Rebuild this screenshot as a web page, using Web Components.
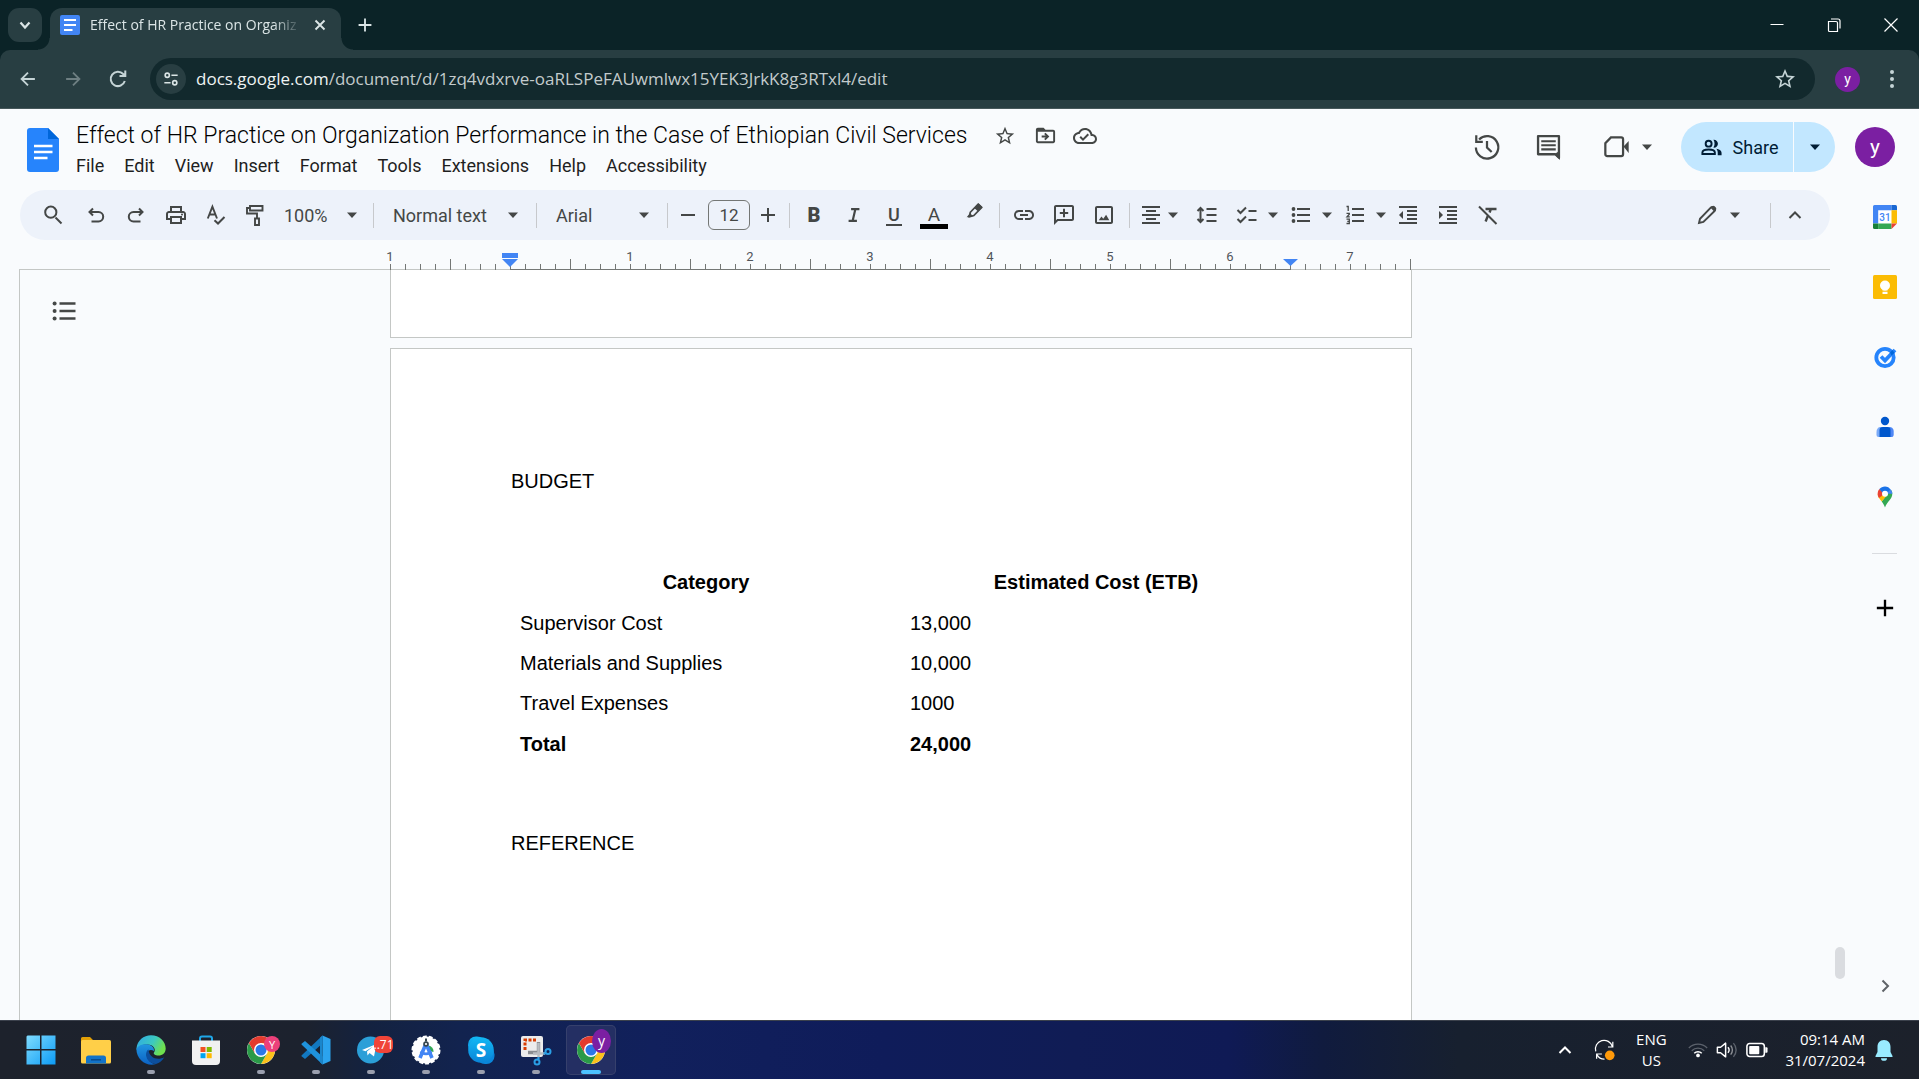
<!DOCTYPE html>
<html lang="en">
<head>
<meta charset="utf-8">
<title>Effect of HR Practice on Organization Performance in the Case of Ethiopian Civil Services</title>
<style>
  html, body { margin: 0; height: 100%; overflow: hidden; }
  body { font-family: Roboto, "Liberation Sans", sans-serif; color: #1f1f1f; background: #f9fbfd; }
</style>
</head>
<body>
<desktop-shell>
  <browser-tabs slot="chrome"></browser-tabs>
  <browser-bar slot="chrome"></browser-bar>
  <docs-header slot="app"></docs-header>
  <docs-workspace slot="app">
    <docs-toolbar slot="editor"></docs-toolbar>
    <docs-ruler slot="editor"></docs-ruler>
    <docs-canvas slot="editor">
      <docs-page tail></docs-page>
      <docs-page>
        <doc-heading>BUDGET</doc-heading>
        <budget-table></budget-table>
        <doc-heading>REFERENCE</doc-heading>
      </docs-page>
    </docs-canvas>
    <side-panel slot="side"></side-panel>
  </docs-workspace>
  <task-bar slot="os"></task-bar>
</desktop-shell>

<script>
const S = (d, w = 2, extra = '') => `<path d="${d}" fill="none" stroke="currentColor" stroke-width="${w}" ${extra}/>`;
const F = d => `<path d="${d}" fill="currentColor"/>`;
const chromeLogo = `
  <circle cx="15" cy="15" r="14" fill="#fff"/>
  <path d="M15 8 H27.1 A14 14 0 0 1 15 29 L21 18.5Z" fill="#fcc21b"/>
  <path d="M2.9 8 A14 14 0 0 0 15 29 L21 18.5 L9 18.5Z" fill="#2a9a48"/>
  <path d="M15 8 H27.1 A14 14 0 0 0 2.9 8 L9 18.5 Z" fill="#e33b2e"/>
  <circle cx="15" cy="15" r="7" fill="#fff"/><circle cx="15" cy="15" r="5.5" fill="#2b78e8"/>`;

/* name: [viewBox, markup] */
const ICONS = {
  caret: ['0 0 12 12', F('M1 3.5h10L6 9z')],
  search: ['0 0 24 24', S('M14.5 14.5L20.5 20.5') + '<circle cx="9.8" cy="9.2" r="5.6" fill="none" stroke="currentColor" stroke-width="2"/>'],
  undo: ['0 0 24 24', S('M9 5.5L5.5 9L9 12.5M5.5 9H14.5a4.2 4.2 0 0 1 0 9.4H7.5')],
  redo: ['0 0 24 24', S('M15 5.5L18.5 9L15 12.5M18.5 9H9.5a4.2 4.2 0 0 0 0 9.4H16.5')],
  print: ['0 0 24 24', F('M19 8h-1V3H6v5H5c-1.66 0-3 1.34-3 3v6h4v4h12v-4h4v-6c0-1.66-1.34-3-3-3zM8 5h8v3H8V5zm8 12v2H8v-4h8v2zm2-2v-2H6v2H4v-4c0-.55.45-1 1-1h14c.55 0 1 .45 1 1v4h-2z') + '<circle cx="18" cy="11.5" r="1" fill="currentColor"/>'],
  spell: ['0 0 24 24', S('M3.8 15.5L8.4 3.6L13 15.5M5.6 11.5H11.4', 1.9) + S('M10.5 17.2L14 20.5L20.5 14')],
  roller: ['0 0 24 24', S('M7 3h12.5v4.5H7zM7 5H4v5.5h10V15M12 15.5h4v6.5h-4z', 1.9)],
  minus: ['0 0 24 24', S('M5 12H19')],
  plus: ['0 0 24 24', S('M5 12H19M12 5V19')],
  italic: ['0 0 24 24', S('M8.5 5H18.5M5.5 19H15.5M13.6 5L10.4 19', 2.6)],
  highlight: ['0 3 24 24', S('M8 12L16.5 3.2L20.3 6.8L11.8 15.6L7 17z', 1.9) + F('M12.5 7.5L17 2.2L21.3 6.4L16.5 11.3zM4 17.5L8 12.5L10.5 16.5z')],
  link: ['0 0 24 24', F('M3.9 12c0-1.71 1.39-3.1 3.1-3.1h4V7H7c-2.76 0-5 2.24-5 5s2.24 5 5 5h4v-1.9H7c-1.71 0-3.1-1.39-3.1-3.1zM8 13h8v-2H8v2zm9-6h-4v1.9h4c1.71 0 3.1 1.39 3.1 3.1s-1.39 3.1-3.1 3.1h-4V17h4c2.76 0 5-2.24 5-5s-2.24-5-5-5z')],
  addcomment: ['0 0 24 24', F('M20 2H4c-1.1 0-2 .9-2 2v18l4-4h14c1.1 0 2-.9 2-2V4c0-1.1-.9-2-2-2zm0 14H5.17L4 17.17V4h16v12zM11 14.2h2V11h3.2V9H13V5.8h-2V9H7.8v2H11z')],
  image: ['0 0 24 24', F('M19 3H5c-1.1 0-2 .9-2 2v14c0 1.1.9 2 2 2h14c1.1 0 2-.9 2-2V5c0-1.1-.9-2-2-2zm0 16H5V5h14v14zM6.8 17.2l2.6-3.6 1.9 2.2 2.8-4 3.2 5.4z')],
  align: ['0 0 24 24', S('M3 4H21M7 8H17M3 12H21M7 16H17M3 20H21')],
  spacing: ['0 0 24 24', S('M11.5 6H21.5M11.5 12H21.5M11.5 18H21.5M5.5 5.5V18.5M2.5 8L5.5 5L8.5 8M2.5 16L5.5 19L8.5 16')],
  checklist: ['0 0 24 24', S('M2.5 7L5.5 10L11 4.5M2.5 16L5.5 19L11 13.5M13.5 8H21.5M13.5 17H21.5')],
  bullets: ['0 0 24 24', S('M8 6H21M8 12H21M8 18H21') + '<g fill="currentColor"><circle cx="4.5" cy="6" r="1.9"/><circle cx="4.5" cy="12" r="1.9"/><circle cx="4.5" cy="18" r="1.9"/></g>'],
  numbers: ['0 0 24 24', S('M9 6H21M9 12H21M9 18H21') + S('M3.5 3.5H5.2V8M3.5 10.3H6.3V11.2L4 13.8H6.8M3.5 16.2H6.3V20.5H3.5M4.3 18.3H6.3', 1.3)],
  dedent: ['0 0 24 24', F('M11 17h10v-2H11v2zm-8-5l4 4V8l-4 4zm0 9h18v-2H3v2zM3 3v2h18V3H3zm8 6h10V7H11v2zm0 4h10v-2H11v2z')],
  indent: ['0 0 24 24', F('M3 21h18v-2H3v2zM3 8v8l4-4-4-4zm8 9h10v-2H11v2zM3 3v2h18V3H3zm8 6h10V7H11v2zm0 4h10v-2H11v2z')],
  clear: ['0 0 24 24', S('M3 3.5L20.5 21') + S('M9.5 6H20.5M14.8 6L13.6 9.5M11.8 13L9.6 18.5', 2.4)],
  pencil: ['0 0 24 24', S('M4 20L5 15.8L16 4.4a1.8 1.8 0 0 1 2.6 0l1 1a1.8 1.8 0 0 1 0 2.6L8.4 19z', 1.9) + F('M15.5 4.8L17 3.3a2 2 0 0 1 2.6 0l1.2 1.2a2 2 0 0 1 0 2.6L19.2 8.6z')],
  up: ['0 0 24 24', S('M6.5 15L12 9.5L17.5 15')],
  star: ['0 0 24 24', F('M22 9.24l-7.19-.62L12 2 9.19 8.63 2 9.24l5.46 4.73L5.82 21 12 17.27 18.18 21l-1.63-7.03L22 9.24zM12 15.4l-3.76 2.27 1-4.28-3.32-2.88 4.38-.38L12 6.1l1.71 4.04 4.38.38-3.32 2.88 1 4.28L12 15.4z')],
  move: ['0 0 24 24', F('M20 6h-8l-2-2H4c-1.1 0-2 .9-2 2v12c0 1.1.9 2 2 2h16c1.1 0 2-.9 2-2V8c0-1.1-.9-2-2-2zm0 12H4V8h16v10zM12.16 12H8v2h4.16l-1.59 1.59L11.99 17 16 13.01 11.99 9l-1.41 1.41z')],
  cloud: ['0 0 24 24', F('M19.35 10.04C18.67 6.59 15.64 4 12 4 9.11 4 6.6 5.64 5.35 8.04 2.34 8.36 0 10.91 0 14c0 3.31 2.69 6 6 6h13c2.76 0 5-2.24 5-5 0-2.64-2.05-4.78-4.65-4.96zM19 18H6c-2.21 0-4-1.79-4-4 0-2.05 1.53-3.76 3.56-3.97l1.07-.11.5-.95C8.08 7.14 9.94 6 12 6c2.62 0 4.88 1.86 5.39 4.43l.3 1.5 1.53.11c1.56.1 2.78 1.41 2.78 2.96 0 1.65-1.35 3-3 3zm-9-3.82l-2.09-2.09L6.5 13.5 10 17l6.01-6.01-1.41-1.41z')],
  history: ['0 0 30 30', S('M6.5 7A12 12 0 1 1 3.1 15.5', 2.4) + S('M3.5 2.5V9.5H10.5', 2.4) + S('M15 8.5V15.5L20 20.3', 2.4)],
  comments: ['0 0 30 30', S('M4.2 3.2H25.8V25.5L22 22H4.2z', 2.4, 'stroke-linejoin="round"') + F('M26.9 18V28L21 22z') + S('M7.5 8.5H22.5M7.5 12.7H22.5M7.5 17H22.5', 2.2)],
  video: ['0 0 30 30', S('M8.5 4.8H19.5a2 2 0 0 1 2 2V22.7a2 2 0 0 1-2 2H4.5a2 2 0 0 1-2-2V11z', 2.4) + F('M22 14.5L27.5 8.5V21.5z')],
  people: ['0 0 24 24', '<circle cx="9" cy="8" r="3.1" fill="none" stroke="currentColor" stroke-width="2"/>' + S('M2.5 18.8V17.3C2.5 15 6 14 9 14s6.5 1 6.5 3.3V18.8z') + F('M14 3.9c2.6-.3 4.7 1.6 4.7 4.1s-2.1 4.4-4.7 4.1c1.6-2.3 1.6-5.9 0-8.2zM17 13.4c3 .5 5.5 1.8 5.5 4V20H18.5V17.4c0-1.6-.6-2.9-1.5-4z')],
  outline: ['0 0 24 24', S('M7.5 4.5H23.5M7.5 12H23.5M7.5 19.5H23.5', 2.3) + '<g fill="currentColor"><circle cx="2.6" cy="4.5" r="2"/><circle cx="2.6" cy="12" r="2"/><circle cx="2.6" cy="19.5" r="2"/></g>'],
  right: ['0 0 24 24', S('M9.5 6.5L15 12L9.5 17.5')],
  chevdown: ['0 0 24 24', S('M7.5 9.5L12 14.5L16.5 9.5', 2.2)],
  close: ['0 0 24 24', S('M7.5 7.5L16.5 16.5M16.5 7.5L7.5 16.5', 1.9)],
  winmin: ['0 0 24 24', S('M5.5 11.5H18.5', 1)],
  winmax: ['0 0 24 24', S('M6.5 8.5H14a1.5 1.5 0 0 1 1.5 1.5V18.5H7.5a1 1 0 0 1-1-1zM9 6H16a2 2 0 0 1 2 2V15.5', 1.2)],
  winclose: ['0 0 24 24', S('M5.5 5.5L18.5 18.5M18.5 5.5L5.5 18.5', 1.2)],
  back: ['0 0 24 24', S('M19.5 12H5.5M12 5L5 12L12 19')],
  forward: ['0 0 24 24', S('M4.5 12H18.5M12 5L19 12L12 19')],
  reload: ['0 0 24 24', S('M18.8 14A7.2 7.2 0 1 1 17.2 7L19 8.8M19.3 3.5V9H13.5')],
  tune: ['0 0 24 24', S('M12.5 7.5H20M4 16.5H11.5') + '<g fill="none" stroke="currentColor" stroke-width="2"><circle cx="7.5" cy="7.5" r="2.5"/><circle cx="16.5" cy="16.5" r="2.5"/></g>'],
  dots: ['0 0 24 24', '<g fill="currentColor"><circle cx="12" cy="5" r="2"/><circle cx="12" cy="12" r="2"/><circle cx="12" cy="19" r="2"/></g>'],
  favicon: ['0 0 20 20', '<rect width="20" height="20" rx="2" fill="#4285f4"/><path d="M4 5H16M4 10H16M4 15H12.5" stroke="#fff" stroke-width="2"/>'],
  docs: ['0 0 32 44', '<path d="M3 0H21L32 11V41a3 3 0 0 1-3 3H3a3 3 0 0 1-3-3V3a3 3 0 0 1 3-3z" fill="#2684fc"/><path d="M21 0L32 11H21z" fill="#0066da"/><path d="M7 18H25.5M7 24H25.5M7 30H20.5" stroke="#fff" stroke-width="2.6"/>'],
  calendar: ['0 0 24 24', '<path d="M5 5H19V19H5z" fill="#fff"/><path d="M1.5 0H18.5V5.2H5.2V18.5H0V1.5A1.5 1.5 0 0 1 1.5 0z" fill="#4285f4"/><path d="M18.5 0H22.5A1.5 1.5 0 0 1 24 1.5V5.2H18.5z" fill="#1967d2"/><path d="M18.5 5.2H24V18.5H18.5z" fill="#fbbc04"/><path d="M5.2 18.5H18.5V24H5.2z" fill="#34a853"/><path d="M0 18.5H5.2V24H1.5A1.5 1.5 0 0 1 0 22.5z" fill="#188038"/><path d="M18.5 18.5H24L18.5 24z" fill="#ea4335"/><text x="12" y="15.8" font-family="Roboto, sans-serif" font-size="10" font-weight="500" text-anchor="middle" fill="#4285f4">31</text>'],
  keep: ['0 0 24 24', '<rect width="24" height="24" rx="1.5" fill="#fbbc04"/><circle cx="12" cy="10.5" r="5" fill="#fff"/><path d="M9.5 13H14.5V15.5H9.5zM9.5 16.7H14.5V19H9.5z" fill="#fff"/>'],
  tasks: ['0 0 24 24', '<circle cx="12" cy="12.5" r="8.7" fill="none" stroke="#2684fc" stroke-width="3.8"/><path d="M8 11.5L12 15.5L22 5" fill="none" stroke="#2684fc" stroke-width="3.8"/><path d="M17 7.5L19.5 5L21.5 8L18.5 10.5z" fill="#0066da"/>'],
  contacts: ['0 0 24 24', '<path d="M7.5 12H16.5C19 12 20.5 13.5 20.5 16V20A2 2 0 0 1 18.5 22H5.5A2 2 0 0 1 3.5 20V17C3.5 14 5 12 7.5 12z" fill="#7baaf7"/><path d="M16 12.2C19 12.2 20.5 14 20.5 16V20A2 2 0 0 1 18.5 22H15z" fill="#4f86f5"/><path d="M10 12H14.5A3 3 0 0 1 17.5 15V22H6.5V15A3.5 3 0 0 1 10 12z" fill="#0057cc"/><circle cx="12" cy="6" r="4.2" fill="#0057cc"/>'],
  maps: ['0 0 24 24', '<path d="M19.3 8.7C19.3 14.5 13.8 16.5 12 22.5C11.3 20.3 10.2 18.6 8.7 16.5L17.8 4.8C18.7 5.9 19.3 7.2 19.3 8.7z" fill="#34a853"/><path d="M8.7 16.5C6 13 4.7 11.5 4.7 8.7L14 7.5L15 9.3z" fill="#fbbc04"/><path d="M4.7 8.7C4.7 7 5.3 5.3 6.4 4.1L12 8.5L6 13C5.1 11.5 4.7 10.3 4.7 8.7z" fill="#ea4335"/><path d="M6.4 4.1C7.8 2.4 9.8 1.5 12 1.5S16.5 2.7 17.8 4.8L12 11z" fill="#1a73e8"/><path d="M17.8 4.8C18.7 5.9 19.3 7.2 19.3 8.7H13z" fill="#4285f4"/><circle cx="12" cy="8.7" r="3" fill="#fff"/>'],
  start: ['0 0 30 30', '<defs><linearGradient id="w" x1="0" y1="0" x2="1" y2="1"><stop offset="0" stop-color="#7fdcff"/><stop offset="1" stop-color="#0c9bf5"/></linearGradient></defs><path d="M1.5 .5H14V14H.5V1.5zM15.5 .5H29.5V14H15.5zM.5 15.5H14V29.5H.5zM15.5 15.5H29.5V29.5H15.5z" fill="url(#w)"/>'],
  files: ['0 0 30 30', '<path d="M0 3.5A1.5 1.5 0 0 1 1.5 2H9L12 5V10H0z" fill="#e2a007"/><rect y="5" width="30" height="23.5" rx="1.5" fill="#ffcf48"/><path d="M5 28.5V23A2.5 2.5 0 0 1 7.5 20.5H22.5A2.5 2.5 0 0 1 25 23V28.5z" fill="#1273c8"/><path d="M10 24.8H20" stroke="#0a4a8c" stroke-width="1.5"/>'],
  edge: ['0 0 30 30', '<defs><linearGradient id="e1" x1="0" y1="0" x2="1" y2=".4"><stop offset="0" stop-color="#2fa8e6"/><stop offset=".6" stop-color="#3cc9c0"/><stop offset="1" stop-color="#6fe04e"/></linearGradient><linearGradient id="e2" x1="0" y1="0" x2="0" y2="1"><stop offset="0" stop-color="#2196e0"/><stop offset="1" stop-color="#0b62c4"/></linearGradient></defs><path d="M.5 13C1.5 5.5 7.5 .3 15 .3C23.5 .3 29.7 6.5 29.7 13.5C29.7 18 26.5 20.5 22.5 20.5C19 20.5 17 19 18 17.5C20.5 14 17 9.5 11.5 9.5C6 9.5 2 11.5 .5 15z" fill="url(#e1)"/><path d="M.4 14C2 10.5 6 8.8 10.5 9.2C15.5 9.6 18.5 12.5 18 16C13 12.5 8.5 18 12 24C14 27.5 17.5 29.3 20 29C11 32 .3 25 .4 14z" fill="url(#e2)"/><path d="M12.5 14.5C8 17 9.5 28 20 29C23.5 28 26.5 25.5 28.3 22.3C21 26 13 22.5 12.5 14.5z" fill="#0c4f9e"/>'],
  store: ['0 0 30 30', '<path d="M9 7V3.5A2 2 0 0 1 11 1.5H19A2 2 0 0 1 21 3.5V7" fill="none" stroke="#1fa7e8" stroke-width="2"/><path d="M1 5.5H29V26A4 4 0 0 1 25 30H5A4 4 0 0 1 1 26z" fill="#f1f1f1"/><path d="M9.5 12H14.5V17H9.5z" fill="#f25022"/><path d="M15.7 12H20.7V17H15.7z" fill="#7fba00"/><path d="M9.5 18.2H14.5V23.2H9.5z" fill="#00a4ef"/><path d="M15.7 18.2H20.7V23.2H15.7z" fill="#ffb900"/>'],
  chrome: ['0 0 30 30', chromeLogo],
  code: ['0 0 30 30', '<path d="M21.5 .5L29.5 4V26L21.5 29.5z" fill="#2ba3ee"/><path d="M21.5 .5V8.5L4 24L.5 21.2V20.5z" fill="#1278c0"/><path d="M21.5 29.5V21.5L4 6L.5 8.8V9.5z" fill="#1f93dc"/><path d="M19 2.8L21.5 .5V29.5L19 27.2z" fill="#1a86cc"/>'],
  telegram: ['0 0 30 30', '<circle cx="14.5" cy="15" r="13.5" fill="#2b9fd8"/><path d="M6 15L20.5 9L18 21.5L13.5 18L11.5 20.5L11 16.5L17 11.5L9.5 16.2z" fill="#fff"/>'],
  studio: ['0 0 30 30', '<circle cx="15" cy="15" r="13.5" fill="#fff" stroke="#fff" stroke-width="2" stroke-dasharray="4 2"/><path d="M17.5 10.5A6 6 0 0 1 22.5 17L18.5 16z" fill="#34a853"/><path d="M14.6 9.5L9 23M15.4 9.5L21 23" stroke="#4285f4" stroke-width="3.6"/><path d="M9.5 16.5C13 19.5 17 19.5 20.5 16.5" fill="none" stroke="#4285f4" stroke-width="2.5"/><circle cx="15" cy="9" r="2.8" fill="#37474f"/><circle cx="15" cy="9" r="1.1" fill="#fff"/><path d="M15 3.5V6.5" stroke="#37474f" stroke-width="2"/>'],
  skype: ['0 0 30 30', '<defs><linearGradient id="s" x1="0" y1="0" x2="0" y2="1"><stop offset="0" stop-color="#12b8f4"/><stop offset="1" stop-color="#0a84d8"/></linearGradient></defs><rect x="2" y="1.5" width="17" height="17" rx="8" fill="url(#s)"/><rect x="11" y="11.5" width="17.5" height="17.5" rx="8" fill="#0a86da"/><circle cx="15" cy="15" r="12.8" fill="url(#s)"/><text x="15" y="22" font-family="Open Sans, sans-serif" font-weight="700" font-size="19" text-anchor="middle" fill="#fff">S</text>'],
  snip: ['0 0 30 30', '<rect x="0" y="1" width="22" height="21" rx="2" fill="#ececec"/><path d="M4 15V5H16" fill="none" stroke="#d83b01" stroke-width="3" stroke-dasharray="3 1.5"/><path d="M17.5 7V17.5H7" fill="none" stroke="#8a8d91" stroke-width="3.4"/><path d="M17.5 8V22M12 18.5H24" stroke="#b9bcc0" stroke-width="2.5"/><circle cx="27" cy="16.5" r="2.5" fill="none" stroke="#2a9fe6" stroke-width="2"/><circle cx="16" cy="27" r="2.5" fill="none" stroke="#2a9fe6" stroke-width="2"/><path d="M17.5 22V24.500M22.500 18.500H24.500" stroke="#2a9fe6" stroke-width="2.200"/>'],
  sync: ['0 0 24 24', S('M2 13A9.5 9.5 0 0 1 21 7.5M21.5 2V8H16M3 21.5V16H9M3.5 17A9.5 9.5 0 0 0 12 21.8', 1.4) + '<circle cx="18" cy="17.5" r="5.5" fill="#ff9a0a"/>'],
  wifi: ['0 0 24 24', '<g fill="none" stroke="#5c626c" stroke-width="1.6"><path d="M1 9.5A15.5 15.5 0 0 1 23 9.5M4.5 13A10.5 10.5 0 0 1 19.5 13"/></g>' + S('M7.5 16A6.4 6.4 0 0 1 16.5 16', 1.8) + '<circle cx="12" cy="18.5" r="2.2" fill="currentColor"/>'],
  volume: ['0 0 24 24', S('M1.5 9H5L10.5 4.5V19.5L5 15H1.5z', 1.6, 'stroke-linejoin="round"') + S('M13 9A4.5 4.5 0 0 1 13 15', 1.5) + S('M16 7A7.5 7.5 0 0 1 16 17', 1.5, 'opacity=".5"') + '<path d="M19 4.5A11 11 0 0 1 19 19.5" fill="none" stroke="#5c626c" stroke-width="1.5"/>'],
  battery: ['0 0 24 24', '<rect x="1" y="5" width="19" height="14" rx="3" fill="none" stroke="currentColor" stroke-width="1.7"/><rect x="3.5" y="7.5" width="11" height="9" rx="1" fill="currentColor"/>' + F('M21 9H22.5A1 1 0 0 1 23.5 10V14A1 1 0 0 1 22.5 15H21z')],
  bell: ['0 0 18 22', '<path d="M9 1C4.8 1 2.5 4 2.5 8V13L.5 17V18H17.5V17L15.5 13V8C15.5 4 13.2 1 9 1z" fill="#99ebff"/><path d="M6 19.2H12A3 2.6 0 0 1 6 19.2z" fill="#99ebff"/>']
};

function define(tag, html, setup) {
  const template = document.createElement('template');
  template.innerHTML = html;
  customElements.define(tag, class extends HTMLElement {
    constructor() {
      super();
      this.attachShadow({ mode: 'open' }).append(template.content.cloneNode(true));
    }
    connectedCallback() {
      if (setup && !this.ready) { this.ready = true; setup(this, this.shadowRoot); }
    }
  });
}

define('g-icon', `<style>:host{display:inline-flex;flex:none}svg{display:block;overflow:visible}</style>`, (el, root) => {
  const [box, body] = ICONS[el.getAttribute('name')];
  const [, , w, h] = box.split(' ').map(Number);
  const size = Number(el.getAttribute('size') || w);
  const holder = document.createElement('template');
  holder.innerHTML = `<svg viewBox="${box}" width="${size}" height="${Math.round(size * h / w)}" aria-hidden="true">${body}</svg>`;
  root.append(holder.content);
});

const BTN = `button{font:inherit;color:inherit;background:none;border:0;margin:0;padding:0;display:flex;align-items:center;justify-content:center;cursor:pointer}`;

define('icon-button', `<style>
  :host{display:flex;width:40px;height:40px;flex:none}
  ${BTN}
  button{flex:1;border-radius:6px;gap:var(--gap,4px);padding-left:var(--inset,0px)}
</style><button type="button"><slot></slot></button>`, (el, root) => {
  const b = root.querySelector('button');
  b.setAttribute('aria-label', el.getAttribute('label'));
  if (el.hasAttribute('icon')) b.insertAdjacentHTML('afterbegin', `<g-icon name="${el.getAttribute('icon')}" size="${el.getAttribute('size') || 24}"></g-icon>`);
  if (el.hasAttribute('menu')) b.insertAdjacentHTML('beforeend', `<g-icon name="caret"></g-icon>`);
});

define('user-avatar', `<style>
  :host{display:block;flex:none}
  ${BTN}
  button{width:var(--size,40px);height:var(--size,40px);border-radius:50%;background:#7b1fa2;color:#fff;font-size:var(--letter,21px);line-height:1}
</style><button type="button" aria-label="Account"><slot></slot></button>`);

define('desktop-shell', `<style>
  :host{display:flex;flex-direction:column;height:100vh}
  .app{flex:1;min-height:0;display:flex;flex-direction:column;background:#f9fbfd}
</style><slot name="chrome"></slot><div class="app"><slot name="app"></slot></div><slot name="os"></slot>`);

define('browser-tabs', `<style>
  :host{display:flex;height:50px;background:#0b2327;color:#dbe5e6;font-family:"Open Sans",sans-serif;flex:none}
  ${BTN}
  .find{width:34px;height:34px;margin:8px 0 0 8px;border-radius:11px;background:#283e42}
  .tab{display:flex;align-items:center;position:relative;width:291px;height:42px;margin:8px 0 0 8px;border-radius:12px 12px 0 0;background:#283e42;box-sizing:border-box;padding:0 9px 8px 10px}
  .tab::before,.tab::after{content:"";position:absolute;bottom:0;width:12px;height:12px}
  .tab::before{left:-12px;background:radial-gradient(circle at 0 0,transparent 11px,#283e42 12px)}
  .tab::after{right:-12px;background:radial-gradient(circle at 100% 0,transparent 11px,#283e42 12px)}
  .name{flex:1;margin-left:10px;font-size:14px;line-height:20px;white-space:nowrap;-webkit-mask-image:linear-gradient(90deg,#000 84%,transparent 97%);mask-image:linear-gradient(90deg,#000 84%,transparent 97%)}
  .new{width:30px;height:34px;margin:8px 0 0 9px}
  .win{margin-left:auto;display:flex}
  .win button{width:57px;height:50px;color:#fff}
</style>
<button class="find" aria-label="Search tabs"><g-icon name="chevdown"></g-icon></button>
<div class="tab"><g-icon name="favicon"></g-icon><span class="name">Effect of HR Practice on Organiz</span><button aria-label="Close tab"><g-icon name="close"></g-icon></button></div>
<button class="new" aria-label="New tab"><g-icon name="plus" size="22"></g-icon></button>
<div class="win"><button aria-label="Minimize"><g-icon name="winmin"></g-icon></button><button aria-label="Restore"><g-icon name="winmax"></g-icon></button><button aria-label="Close"><g-icon name="winclose"></g-icon></button></div>`);

define('browser-bar', `<style>
  :host{display:block;background:#0b2327;color:#c5d4d6;flex:none}
  .bar{display:flex;align-items:center;height:58px;border-bottom:1px solid #46575a;background:#283e42;border-radius:10px 10px 0 0;padding-left:5px}
  ${BTN}
  .nav{width:45px;height:44px}
  .nav.off{color:#6e7f82}
  .box{flex:1;display:flex;align-items:center;height:42px;border-radius:21px;background:#12292d;margin:0 20px 0 10px;padding:0 18px 0 6px;font-family:"Open Sans",sans-serif}
  .site{width:30px;height:30px;border-radius:50%;background:#283e42;flex:none;color:#dbe5e6}
  .url{flex:1;margin-left:10px;font-size:17px;line-height:24px;color:#c3cbcc;white-space:nowrap}
  .url b{font-weight:400;color:#eef3f3}
  user-avatar{--size:25px;--letter:14px}
  .more{width:59px;height:44px;padding-left:4px}
</style>
<div class="bar">
<button class="nav" aria-label="Back"><g-icon name="back" size="22"></g-icon></button>
<button class="nav off" aria-label="Forward"><g-icon name="forward" size="22"></g-icon></button>
<button class="nav" aria-label="Reload"><g-icon name="reload"></g-icon></button>
<div class="box"><button class="site" aria-label="Site information"><g-icon name="tune" size="20"></g-icon></button><span class="url"><b>docs.google.com</b>/document/d/1zq4vdxrve-oaRLSPeFAUwmlwx15YEK3JrkK8g3RTxl4/edit</span><button aria-label="Bookmark"><g-icon name="star"></g-icon></button></div>
<user-avatar>y</user-avatar>
<button class="more" aria-label="Menu"><g-icon name="dots"></g-icon></button>
</div>`);

define('docs-header', `<style>
  :host{display:flex;align-items:flex-start;height:69px;padding:12px 24px 0 27px;flex:none}
  ${BTN}
  .logo{margin-top:7px}
  .text{margin-left:17px}
  .line{display:flex;align-items:center;height:29px;color:#444746}
  h1{margin:0 18px 0 0;font-weight:300;font-size:23px;line-height:29px;white-space:nowrap;color:#000}
  .line icon-button{height:29px}
  nav{display:flex;align-items:center;height:31px;gap:20px;font-size:18px}
  nav button{line-height:31px;color:#1f1f1f}
  .right{margin-left:auto;display:flex;align-items:center;height:52px;color:#444746}
  .right icon-button{width:50px}
  .right .cm{margin-left:11px}
  .right .meet{width:66px;margin:0 20px 0 22px;--gap:10px}
  .share{display:flex;height:50px;border-radius:25px;overflow:hidden;background:#c2e7ff;color:#001d35;font-size:18px;margin-right:20px}
  .share .main{width:113px;gap:10px;border-right:1px solid #f9fbfd;padding-left:4px;box-sizing:border-box}
  .share .drop{width:41px}
</style>
<g-icon class="logo" name="docs"></g-icon>
<div class="text">
  <div class="line"><h1>Effect of HR Practice on Organization Performance in the Case of Ethiopian Civil Services</h1>
    <icon-button label="Star" icon="star" size="22"></icon-button><icon-button label="Move" icon="move" size="23"></icon-button><icon-button label="Saved to Drive" icon="cloud" size="24"></icon-button></div>
  <nav><button>File</button><button>Edit</button><button>View</button><button>Insert</button><button>Format</button><button>Tools</button><button>Extensions</button><button>Help</button><button>Accessibility</button></nav>
</div>
<div class="right">
  <icon-button label="Last edit" icon="history" size="28"></icon-button>
  <icon-button class="cm" label="Comments" icon="comments" size="29"></icon-button>
  <icon-button class="meet" label="Join a call" icon="video" size="28" menu></icon-button>
  <div class="share"><button class="main"><g-icon name="people" size="23"></g-icon>Share</button><button class="drop" aria-label="Share options"><g-icon name="caret"></g-icon></button></div>
  <user-avatar>y</user-avatar>
</div>`);

define('docs-workspace', `<style>
  :host{display:flex;flex:1;min-height:0}
  .editor{flex:1;min-width:0;display:flex;flex-direction:column;margin-left:19px}
  .scroll{width:20px;display:flex;flex-direction:column;justify-content:flex-end;align-items:center}
  .thumb{width:10px;height:32px;border-radius:5px;background:#dadce0;margin-bottom:41px}
</style><div class="editor"><slot name="editor"></slot></div><div class="scroll"><div class="thumb"></div></div><slot name="side"></slot>`);

define('drop-down', `<style>
  :host{display:grid;align-items:center;height:40px;flex:none}
  select,g-icon{grid-area:1/1}
  select{appearance:none;border:0;background:none;font:inherit;font-size:18px;color:inherit;padding:0 0 0 var(--pad,19px);width:100%;height:40px;outline:0}
  g-icon{justify-self:end;margin-right:var(--end,17px);pointer-events:none}
</style><select></select><g-icon name="caret"></g-icon>`, (el, root) => {
  const select = root.querySelector('select');
  select.setAttribute('aria-label', el.getAttribute('label'));
  select.add(new Option(el.getAttribute('value')));
});

define('docs-toolbar', `<style>
  :host{display:flex;align-items:center;height:50px;border-radius:25px;background:#edf2fa;color:#444746;margin-left:1px;padding-left:13px;flex:none}
  hr{width:1px;height:25px;border:0;margin:0;background:#c7c9cc;flex:none}
  .first{margin-right:3px}
  .zoom{width:100px;--pad:11px;--end:15px}
  .style{width:162px}
  .font{width:130px}
  .paint{width:37px}
  input{box-sizing:border-box;width:42px;height:30px;border:1px solid #747775;border-radius:6px;background:none;font:17px Roboto,sans-serif;color:#444746;text-align:center;padding:0}
  .plus{width:35px;margin-right:4px}
  .group{display:flex;padding:0 5px 0 4px}
  .b{font-weight:900;font-size:20px}
  .u{font-weight:500;font-size:18px}
  .u span{line-height:19px;border-bottom:2px solid;padding:0 2px}
  .a{font-size:19px}
  .a span{line-height:19px;border-bottom:5px solid #000;width:28px;text-align:center;margin-top:3px}
  .al{width:57px;--gap:4px}
  .ls{width:39px}
  .split{width:54px;--gap:8px;--inset:8px}
  .right{margin-left:auto;display:flex;align-items:center}
  .mode{width:80px;--gap:10px;margin-right:12px}
  .hide{width:48px;margin-right:11px}
</style>
<icon-button class="first" label="Search menus" icon="search"></icon-button>
<icon-button label="Undo" icon="undo"></icon-button><icon-button label="Redo" icon="redo"></icon-button><icon-button label="Print" icon="print"></icon-button><icon-button label="Spelling" icon="spell"></icon-button><icon-button class="paint" label="Paint format" icon="roller"></icon-button>
<drop-down class="zoom" label="Zoom" value="100%"></drop-down><hr>
<drop-down class="style" label="Styles" value="Normal text"></drop-down><hr>
<drop-down class="font" label="Font" value="Arial"></drop-down><hr>
<icon-button label="Decrease font size" icon="minus"></icon-button><input value="12" aria-label="Font size"><icon-button class="plus" label="Increase font size" icon="plus"></icon-button><hr>
<div class="group"><icon-button class="b" label="Bold">B</icon-button><icon-button label="Italic" icon="italic" size="20"></icon-button><icon-button class="u" label="Underline"><span>U</span></icon-button><icon-button class="a" label="Text colour"><span>A</span></icon-button><icon-button label="Highlight colour" icon="highlight" size="22"></icon-button></div><hr>
<div class="group"><icon-button label="Insert link" icon="link"></icon-button><icon-button label="Add comment" icon="addcomment"></icon-button><icon-button label="Insert image" icon="image"></icon-button></div><hr>
<icon-button class="al" label="Align" icon="align" menu></icon-button><icon-button class="ls" label="Line spacing" icon="spacing"></icon-button><icon-button class="split" label="Checklist" icon="checklist" menu></icon-button><icon-button class="split" label="Bulleted list" icon="bullets" menu></icon-button><icon-button class="split" label="Numbered list" icon="numbers" menu></icon-button><icon-button label="Decrease indent" icon="dedent"></icon-button><icon-button label="Increase indent" icon="indent"></icon-button><icon-button label="Clear formatting" icon="clear"></icon-button>
<div class="right"><icon-button class="mode" label="Editing mode" icon="pencil" menu></icon-button><hr><icon-button class="hide" label="Hide the menus" icon="up"></icon-button></div>`);

define('docs-ruler', `<style>
  :host{display:flex;justify-content:center;height:30px;padding-right:47px;box-shadow:inset 0 -1px #c4c7c5;flex:none}
  svg{display:block;overflow:visible;flex:none}
  text{font:13px Roboto,sans-serif;fill:#50545a;text-anchor:middle}
</style>`, (el, root) => {
  let out = '';
  for (let i = 0; i <= 68; i++) {
    const x = i * 15;
    const tall = i % 8 === 4;
    out += `<rect x="${x}" y="${tall ? 19 : 24}" width="1" height="${tall ? 11 : 6}" fill="#747775"/>`;
    if (i % 8 === 0 && i !== 8) out += `<text x="${x}" y="21">${Math.abs(i / 8 - 1)}</text>`;
  }
  const t = document.createElement('template');
  t.innerHTML = `<svg width="1022" height="30">${out}<rect x="121" y="29" width="780" height="1" fill="#747775"/>
    <path d="M112 13h16v5h-16zM112 19h16L120 27z" fill="#4285f4"/><path d="M893 19h15L900.5 26z" fill="#4285f4"/></svg>`;
  root.append(t.content);
});

define('docs-canvas', `<style>
  :host{display:block;position:relative;flex:1;min-height:0;overflow:hidden;border-left:1px solid #c4c7c5}
  .pages{display:flex;flex-direction:column;align-items:center;gap:10px;padding-right:48px}
  .outline{position:absolute;left:24px;top:21px;color:#444746}
</style><icon-button class="outline" label="Show outline" icon="outline" size="24"></icon-button><div class="pages"><slot></slot></div>`);

define('docs-page', `<style>
  :host{display:block;box-sizing:border-box;width:1022px;min-height:1300px;padding:118px 120px;border:1px solid #c4c7c5;background:#fff;font:20px/28px "Liberation Sans",Arial,sans-serif;color:#000}
  :host([tail]){min-height:68px;padding:0;border-top:0}
</style><slot></slot>`);

define('doc-heading', `<style>:host{display:block}p{margin:0}</style><p><slot></slot></p>`);

define('budget-table', `<style>
  :host{display:block;margin:66px 0 65px}
  table{width:780px;border-collapse:collapse;table-layout:fixed}
  th,td{height:40px;box-sizing:border-box;padding:0 9px;text-align:left;font-weight:400}
  thead th{text-align:center;font-weight:700;height:42px}
  tfoot td{font-weight:700;height:41px}
</style>
<table>
<thead><tr><th scope="col">Category</th><th scope="col">Estimated Cost (ETB)</th></tr></thead>
<tbody><tr><td>Supervisor Cost</td><td>13,000</td></tr><tr><td>Materials and Supplies</td><td>10,000</td></tr><tr><td>Travel Expenses</td><td>1000</td></tr></tbody>
<tfoot><tr><td>Total</td><td>24,000</td></tr></tfoot>
</table>`);

define('side-panel', `<style>
  :host{display:flex;flex-direction:column;align-items:center;width:69px;flex:none}
  nav{display:flex;flex-direction:column;gap:46px;padding-top:15px}
  icon-button{height:24px}
  hr{width:25px;height:1px;border:0;background:#dadce0;margin:44px 0 42px}
  .add{color:#000}
  .end{margin:auto 0 22px;color:#5f6368}
</style>
<nav><icon-button label="Calendar" icon="calendar"></icon-button><icon-button label="Keep" icon="keep"></icon-button><icon-button label="Tasks" icon="tasks"></icon-button><icon-button label="Contacts" icon="contacts"></icon-button><icon-button label="Maps" icon="maps"></icon-button></nav>
<hr><icon-button class="add" label="Get add-ons" icon="plus" size="28"></icon-button>
<icon-button class="end" label="Hide side panel" icon="right"></icon-button>`);

define('task-app', `<style>
  :host{display:block;position:relative;width:50px;height:50px;flex:none}
  ${BTN}
  button{width:50px;height:50px;box-sizing:border-box;border-radius:5px}
  :host([active]) button{background:#242f63;box-shadow:inset 0 0 0 1px #36406c}
  .bar{position:absolute;left:21px;bottom:1px;width:8px;height:4px;border-radius:2px;background:#9a9fae;display:none}
  :host([open]) .bar,:host([active]) .bar{display:block}
  :host([active]) .bar{left:15px;width:20px;background:#4cc2ff}
  ::slotted(span){position:absolute;display:flex;align-items:center;justify-content:center;box-sizing:border-box;color:#fff;line-height:1;pointer-events:none}
</style><button type="button"></button><div class="bar"></div><slot></slot>`, (el, root) => {
  const b = root.querySelector('button');
  b.setAttribute('aria-label', el.getAttribute('label'));
  b.innerHTML = `<g-icon name="${el.getAttribute('icon')}" size="30"></g-icon>`;
});

define('task-bar', `<style>
  :host{display:flex;align-items:center;justify-content:space-between;box-sizing:border-box;height:59px;flex:none;border-top:1px solid #3b414c;padding:0 26px 0 16px;color:#fff;font:15px/21px "Open Sans",sans-serif;
    background:linear-gradient(90deg,#1d222c 0,#1c222e 16%,#14223f 19%,#12234f 24%,#11205c 34%,#0f1c5a 46%,#101c55 56%,#0f1a55 64%,#101b3e 69%,#17202f 76%,#1c212b 100%)}
  .apps{display:flex;gap:5px}
  .pink,.purple{border-radius:50%}
  .pink{left:28px;top:11px;width:16px;height:16px;background:#ec407a;font-size:11px}
  .purple{left:26px;top:4px;width:19px;height:24px;background:#7b1fa2;font-size:14px}
  .red{left:28px;top:11px;width:19px;height:17px;border-radius:6px;background:#f04438;font-size:12px}
  .tray{display:flex;align-items:center}
  ${BTN}
  .lang{width:32px;margin:0 21px 0 20px;flex-direction:column}
  .time{margin:0 10px 0 17px;flex-direction:column;align-items:flex-end;white-space:nowrap}
  .sync{margin-left:17px}
  .net{gap:8px}
</style>
<div class="apps">
<task-app label="Start" icon="start"></task-app><task-app label="File Explorer" icon="files"></task-app><task-app open label="Edge" icon="edge"></task-app><task-app label="Store" icon="store"></task-app>
<task-app open label="Chrome" icon="chrome"><span class="pink">Y</span></task-app><task-app open label="Visual Studio Code" icon="code"></task-app><task-app open label="Telegram" icon="telegram"><span class="red">..71</span></task-app>
<task-app open label="Android Studio" icon="studio"></task-app><task-app open label="Skype" icon="skype"></task-app><task-app open label="Snipping Tool" icon="snip"></task-app><task-app active label="Chrome" icon="chrome"><span class="purple">y</span></task-app>
</div>
<div class="tray"><button aria-label="Show hidden icons"><g-icon name="up"></g-icon></button><button class="sync" aria-label="Updates"><g-icon name="sync" size="21"></g-icon></button>
<button class="lang"><span>ENG</span><span>US</span></button>
<button class="net" aria-label="Network, volume and battery"><g-icon name="wifi" size="20"></g-icon><g-icon name="volume" size="22"></g-icon><g-icon name="battery" size="22"></g-icon></button>
<button class="time"><span>09:14 AM</span><span>31/07/2024</span></button><button aria-label="Notifications"><g-icon name="bell"></g-icon></button></div>`);
</script>
</body>
</html>
